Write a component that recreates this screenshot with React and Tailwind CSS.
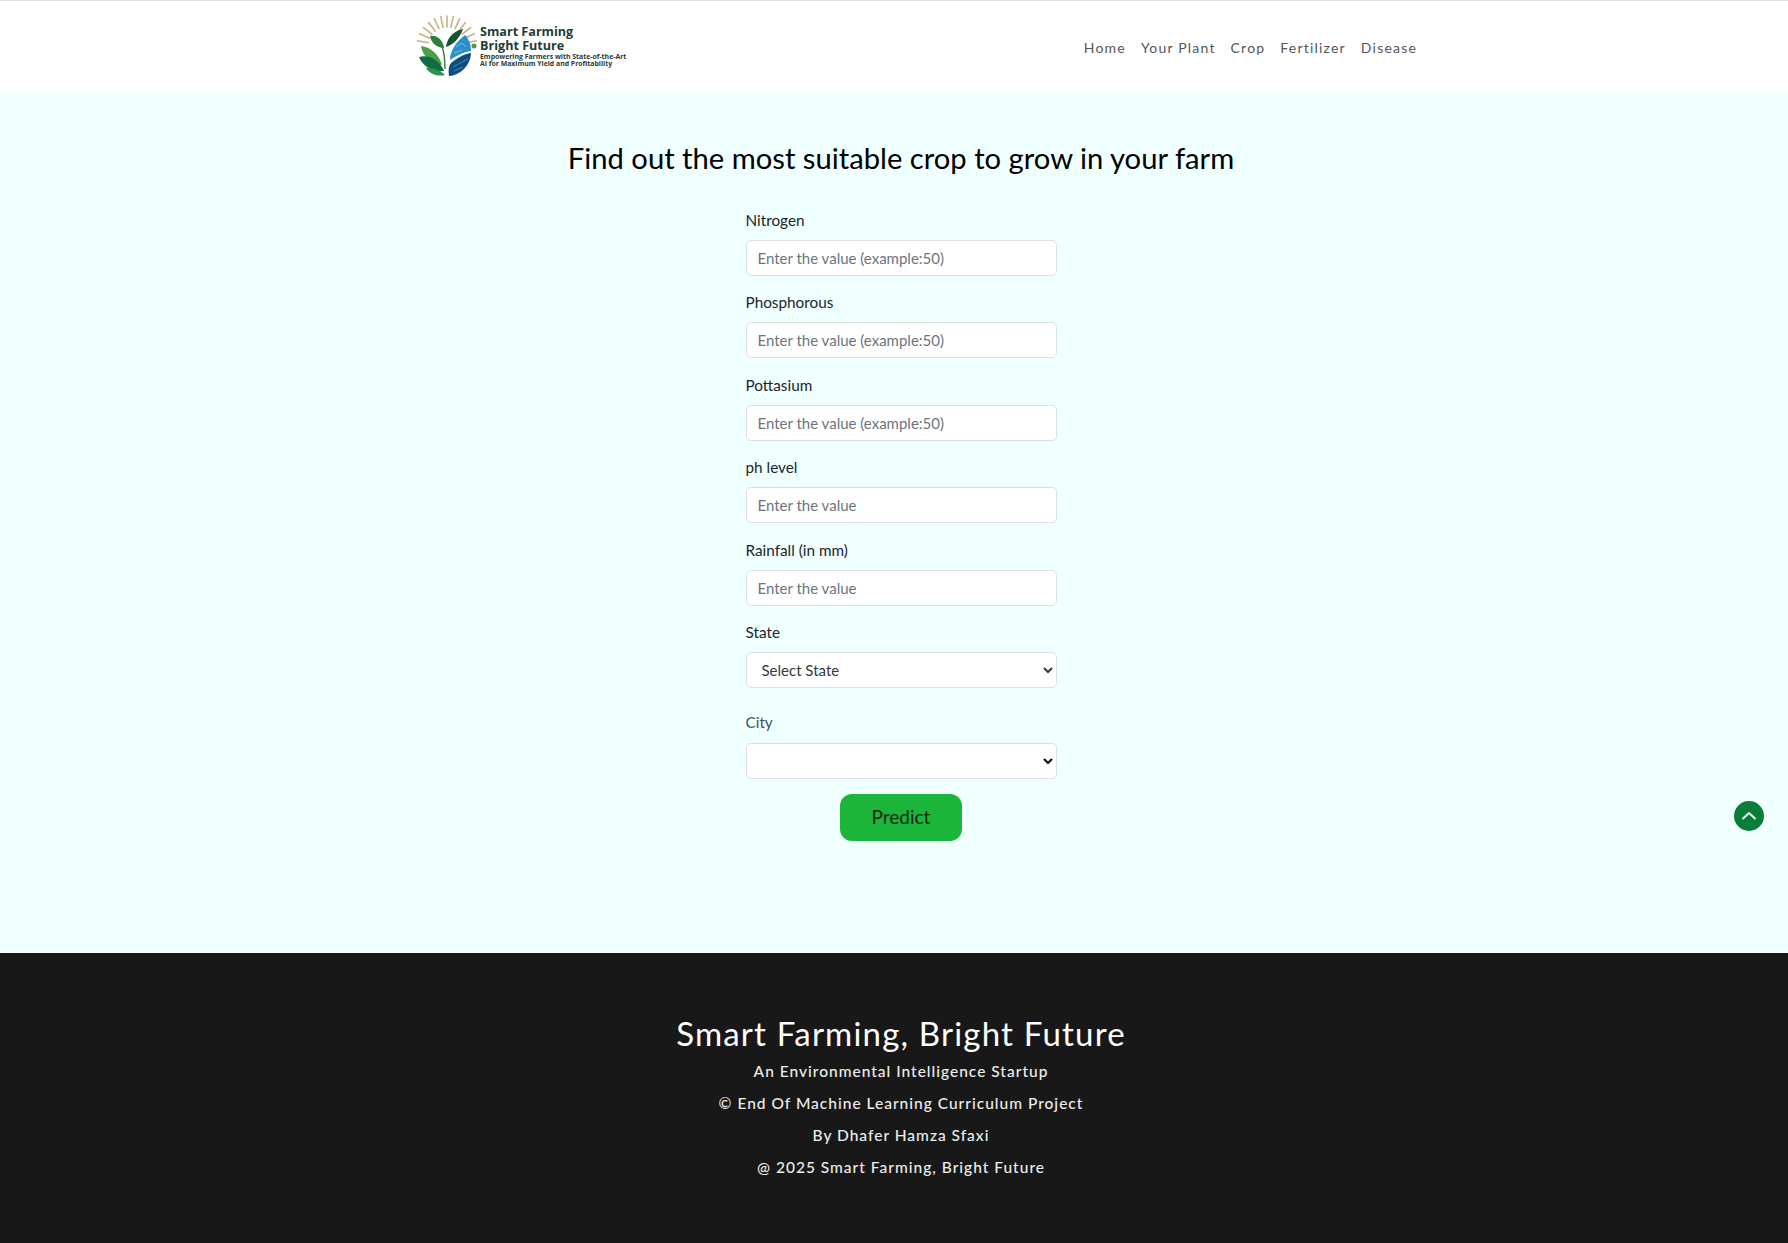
import React from "react";

const fields = [
  { label: "Nitrogen", placeholder: "Enter the value (example:50)" },
  { label: "Phosphorous", placeholder: "Enter the value (example:50)" },
  { label: "Pottasium", placeholder: "Enter the value (example:50)" },
  { label: "ph level", placeholder: "Enter the value" },
  { label: "Rainfall (in mm)", placeholder: "Enter the value" },
];

const navLinks = ["Home", "Your Plant", "Crop", "Fertilizer", "Disease"];

const footerLines = [
  "An Environmental Intelligence Startup",
  "© End Of Machine Learning Curriculum Project",
  "By Dhafer Hamza Sfaxi",
  "@ 2025 Smart Farming, Bright Future",
];

const rays = [-80, -66, -52, -38, -25, -12, 0, 12, 25, 38, 52, 66, 80];

const LogoMark = () => (
  <svg width="62" height="62" viewBox="0 0 62 62" className="shrink-0 mb-[3px]">
    {rays.map((r) => (
      <rect key={r} x="30.2" y="0.5" width="1.6" height="12" fill="#c8ae84" transform={`rotate(${r} 31 31)`} />
    ))}
    <path d="M5 31 C14 32 23 39 26 50 C15 49 7 42 5 31Z" fill="#4a9e48" />
    <path d="M3 42 C12 39 24 45 28 56 C17 57 7 52 3 42Z" fill="#0f6d45" />
    <path d="M10 53 C16 52 24 55 29 60 C21 62 14 59 10 53Z" fill="#2f8f4e" />
    <path d="M29 54 C29 42 28 34 24 26" stroke="#2d7a3c" strokeWidth="1.4" fill="none" />
    <path d="M14 21 C21 20 27 25 28 33 C21 33 15 28 14 21Z" fill="#2f7d38" />
    <path d="M47 14 C44 23 37 30 30 32 C31 23 37 16 47 14Z" fill="#14532d" />
    <path d="M49 20 C53 24 55 30 55 36 C47 37 40 41 34 45 C34 36 40 27 49 20Z" fill="#2c8fcb" />
    <path d="M40 32 L46 28 L50 32 M38 38 L46 35" stroke="#bfe6f7" strokeWidth="0.5" fill="none" />
    <path d="M55 38 C55 48 46 60 33 61 C32 55 33 50 35 48 C41 43 48 39 55 38Z" fill="#0f4c81" />
    <path d="M37 52 L46 47 L52 44 M38 56 L47 52" stroke="#7cc4e8" strokeWidth="0.5" fill="none" />
    <circle cx="58" cy="31" r="2.5" fill="#4c9a4a" />
  </svg>
);

const Logo = () => (
  <div className="flex items-center w-[214px] h-[64px]">
    <LogoMark />
    <div className="ml-[2px] mb-[4px] text-[#1f3d33] font-['Open_Sans',sans-serif]">
      <div className="text-[12.6px] leading-[14px] font-bold whitespace-nowrap">
        Smart Farming
        <br />
        Bright Future
      </div>
      <div className="text-[6.9px] leading-[7px] font-bold whitespace-nowrap text-[#2b3a35]">
        Empowering Farmers with State-of-the-Art
        <br />
        AI for Maximum Yield and Profitability
      </div>
    </div>
  </div>
);

const App = () => {
  return (
    <div className="relative min-h-[1243px] overflow-hidden bg-[#f0ffff] font-['Lato',sans-serif]">
      <header className="h-[94px] bg-white border-t border-[#e2e2e2] flex items-center justify-between pl-[416px] pr-[371px]">
        <Logo />
        <nav className="flex gap-[15px] text-[14px] tracking-[1.2px] text-[#555]">
          {navLinks.map((link) => (
            <a key={link} href="#" className="whitespace-nowrap">
              {link}
            </a>
          ))}
        </nav>
      </header>

      <main className="h-[859px] pl-[14px] flex flex-col items-center">
        <h1 className="mt-[44px] text-[29.2px] leading-[40px] text-black whitespace-nowrap">
          Find out the most suitable crop to grow in your farm
        </h1>
        <form className="w-[311px] mt-[29.5px]">
          {fields.map((f) => (
            <div key={f.label} className="mb-[14.5px]">
              <label className="block text-[15.3px] leading-[24px] mb-[8px] text-[#212529]">{f.label}</label>
              <input
                type="text"
                placeholder={f.placeholder}
                className="block w-full h-[36px] px-[11px] text-[15px] bg-white border border-[#dcdfe3] rounded-[5px] placeholder:text-[#6c757d]"
              />
            </div>
          ))}
          <label className="block text-[15.3px] leading-[24px] mb-[8px] text-[#212529]">State</label>
          <select className="block w-full h-[36px] pl-[11px] text-[15px] text-[#343a40] bg-white border border-[#dcdfe3] rounded-[5px]">
            <option>Select State</option>
          </select>
          <label className="block text-[15.3px] leading-[24px] mt-[22px] mb-[9px] text-[#495057]">City</label>
          <select className="block w-full h-[36px] pl-[11px] text-[15px] bg-white border border-[#dcdfe3] rounded-[5px]"></select>
          <div className="flex justify-center mt-[15px]">
            <button type="button" className="w-[122px] h-[47px] rounded-[12px] bg-[#1bb53a] text-[19px] text-[#0c2b12]">
              Predict
            </button>
          </div>
        </form>
      </main>

      <footer className="h-[290px] bg-[#181818] pl-[14px] pt-[58px] flex flex-col items-center text-white">
        <h2 className="text-[33px] leading-[44px] tracking-[1.2px] whitespace-nowrap">Smart Farming, Bright Future</h2>
        {footerLines.map((line) => (
          <p key={line} className="text-[15.5px] leading-[32px] tracking-[1px] font-medium text-[#eee] whitespace-nowrap">
            {line}
          </p>
        ))}
      </footer>

      <button type="button" className="absolute left-[1734px] top-[801px] w-[30px] h-[30px] rounded-full bg-[#0b7d3a] flex items-center justify-center">
        <svg width="18" height="18" viewBox="0 0 18 18" fill="none">
          <path d="M3 11.5 L9 6 L15 11.5" stroke="#e6f7ec" strokeWidth="2" strokeLinecap="round" strokeLinejoin="round" />
        </svg>
      </button>
    </div>
  );
};

export default App;
